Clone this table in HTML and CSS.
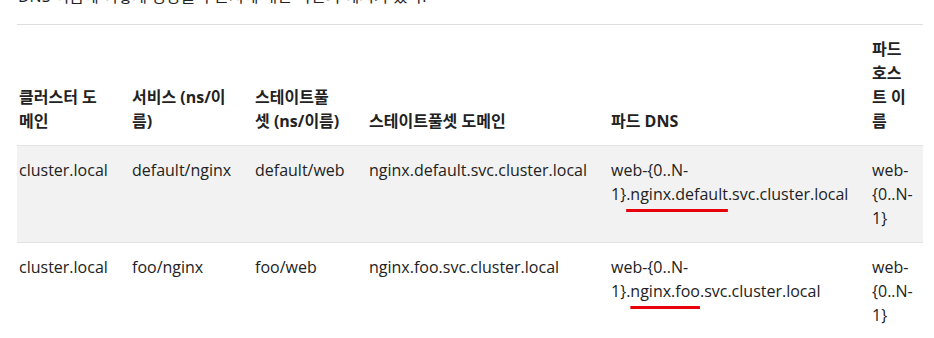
FILE: index.html
```html
<!DOCTYPE html>
<html lang="ko">
<head>
<meta charset="utf-8">
<title>스테이트풀셋 DNS 예시</title>
<link rel="stylesheet" href="styles.css">
</head>
<body>
<main class="content">
  <p class="intro">DNS 이름에 어떻게 영향을 주는지에 대한 약간의 예시가 있다.</p>
  <table class="dns-table">
    <colgroup>
      <col class="c1"><col class="c2"><col class="c3"><col class="c4"><col class="c5"><col class="c6">
    </colgroup>
    <thead>
      <tr>
        <th>클러스터 도메인</th>
        <th>서비스 (ns/이름)</th>
        <th class="narrow">스테이트풀셋 (ns/이름)</th>
        <th>스테이트풀셋 도메인</th>
        <th>파드 DNS</th>
        <th>파드 호스트 이름</th>
      </tr>
    </thead>
    <tbody>
      <tr class="striped">
        <td>cluster.local</td>
        <td>default/nginx</td>
        <td>default/web</td>
        <td>nginx.default.svc.cluster.local</td>
        <td>web-{0..N-1}<span class="mark">.nginx.default</span>.svc.cluster.local</td>
        <td>web-{0..N-1}</td>
      </tr>
      <tr>
        <td>cluster.local</td>
        <td>foo/nginx</td>
        <td>foo/web</td>
        <td>nginx.foo.svc.cluster.local</td>
        <td>web-{0..N-1}.<span class="mark">nginx.foo</span>.svc.cluster.local</td>
        <td>web-{0..N-1}</td>
      </tr>
    </tbody>
  </table>
</main>
</body>
</html>
```
FILE: styles.css
```css
html, body {
  margin: 0;
  padding: 0;
  background: #fff;
}

body {
  font-family: "Open Sans", "Noto Sans CJK KR", sans-serif;
  font-size: 16px;
  line-height: 1.5;
  color: #222;
  overflow: hidden;
}

.content {
  padding: 0 11px 0 17px;
  margin-top: -16px;
}

.intro {
  margin: 0 0 16px 1px;
}

.dns-table {
  width: 906px;
  border-collapse: collapse;
  table-layout: fixed;
  border-top: 1px solid #dedede;
}

.c1 { width: 113px; }
.c2 { width: 123px; }
.c3 { width: 114px; }
.c4 { width: 242px; }
.c5 { width: 261px; }
.c6 { width: 53px; }

.dns-table th,
.dns-table td {
  padding: 12px 22px 12px 2px;
  text-align: left;
}

.dns-table th {
  font-weight: 700;
  vertical-align: bottom;
  border-bottom: 1px solid #e3e3e3;
}

.dns-table th.narrow {
  padding-right: 27px;
}

.dns-table td {
  vertical-align: top;
  border-bottom: 1px solid #e3e3e3;
}

.dns-table tbody tr:last-child td {
  border-bottom: none;
}

.dns-table th:last-child,
.dns-table td:last-child {
  padding-right: 8px;
}

.striped {
  background: #f2f2f2;
}

.mark {
  text-decoration: underline;
  text-decoration-color: #e8000b;
  text-decoration-thickness: 3px;
  text-underline-offset: 9px;
  text-decoration-skip-ink: none;
}
```
